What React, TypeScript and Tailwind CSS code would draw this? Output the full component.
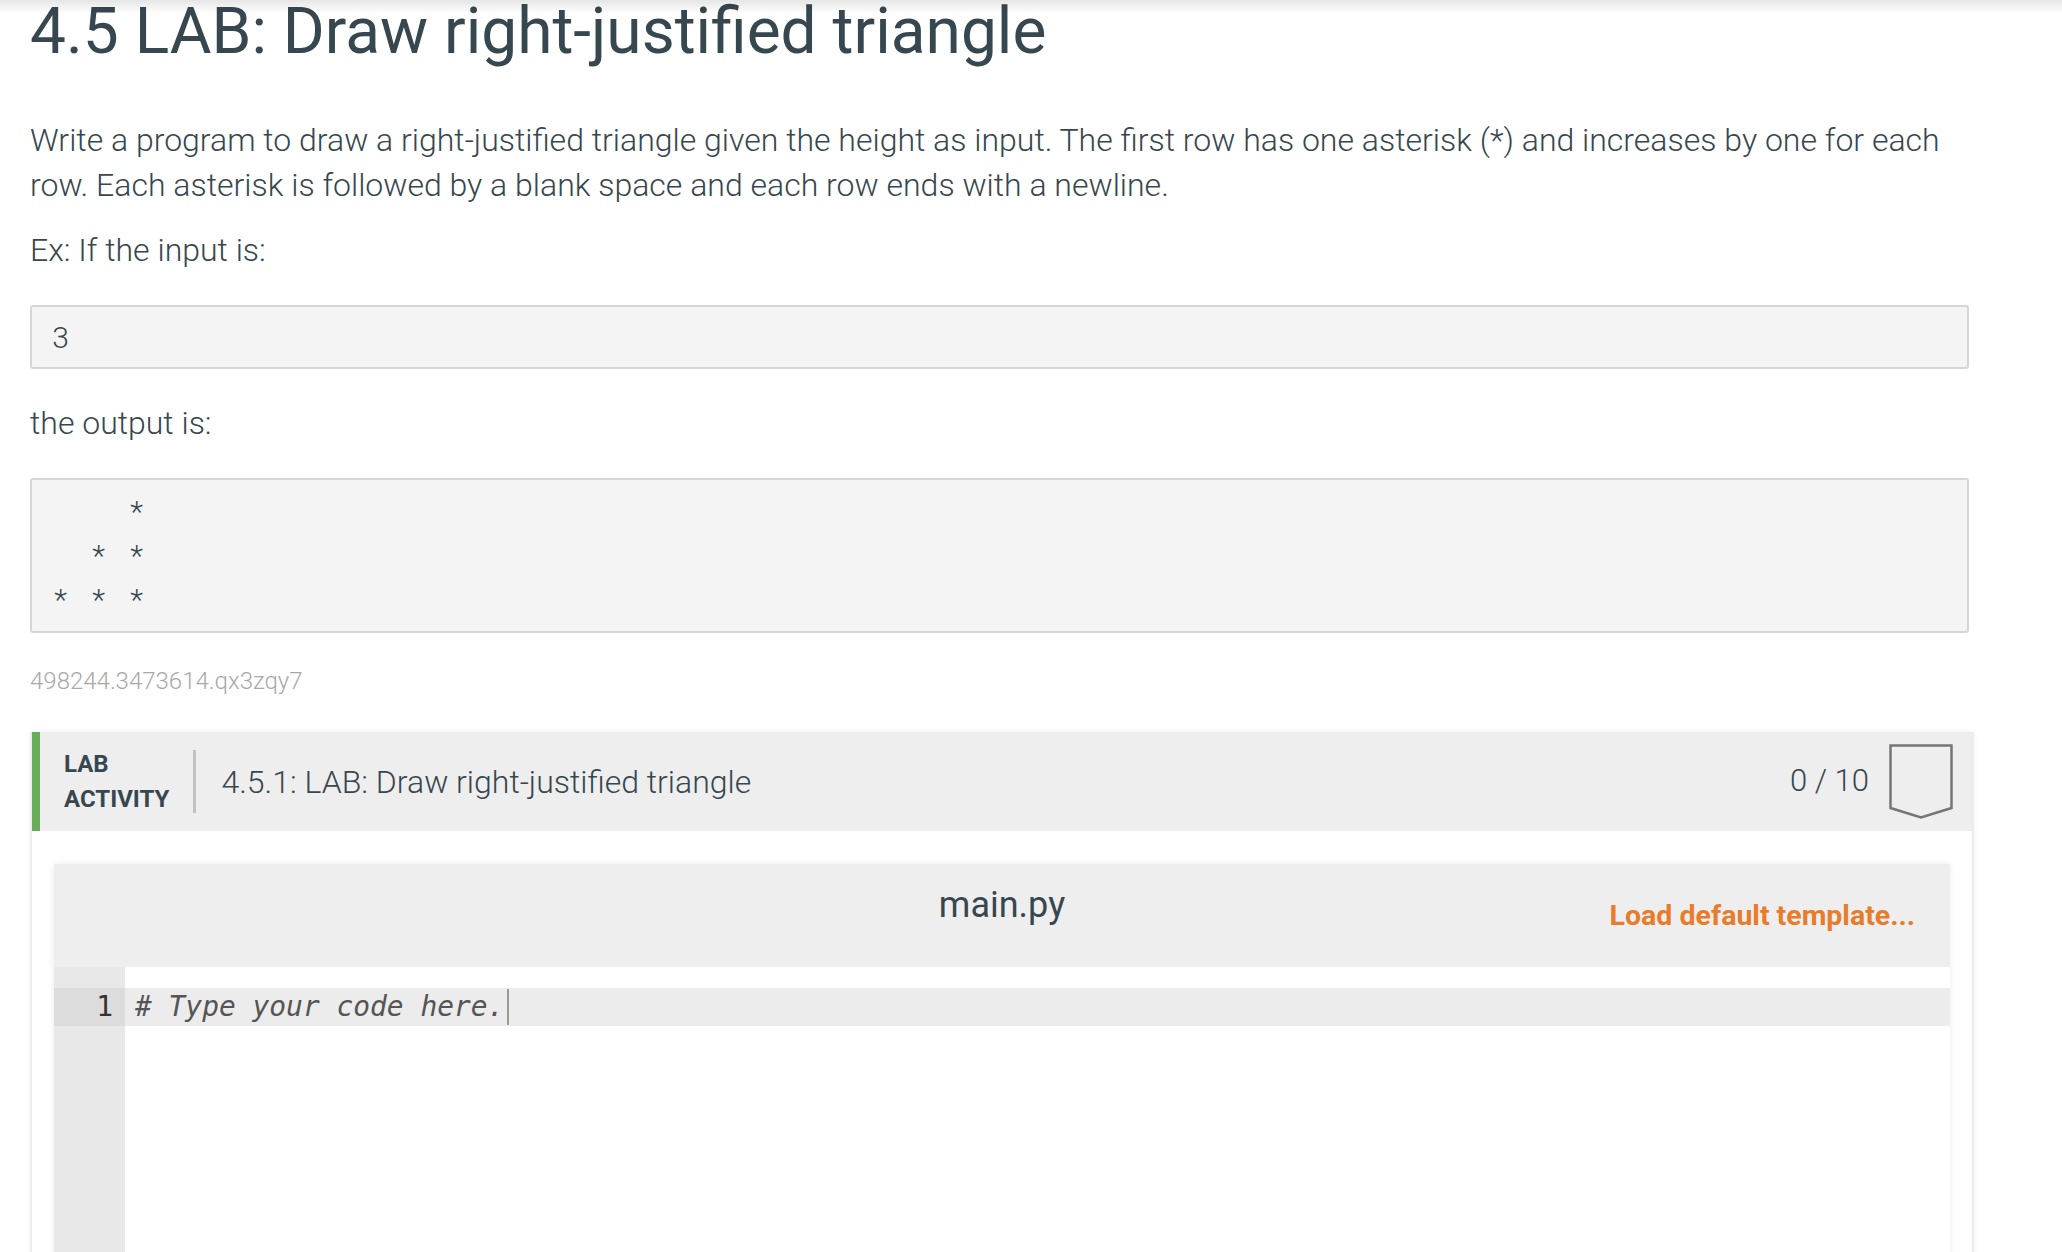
import React from 'react';

const outputRows = ['    *', '  * *', '* * *'];

// one fixed-width cell per character, so the triangle lines up like a console
const MonoRow = ({ text }: { text: string }) => (
  <div className="flex h-[44px] items-center">
    {text.split('').map((ch, i) => (
      <span key={i} className="inline-block w-[19px] text-center">
        {ch === ' ' ? '\u00a0' : ch}
      </span>
    ))}
  </div>
);

const Shield = () => (
  <svg width="64" height="75" viewBox="0 0 64 75" fill="none">
    <path d="M1.5 1.5 H62.5 V64 L32 73.5 L1.5 64 Z" stroke="#757575" strokeWidth="2.5" strokeLinejoin="miter" />
  </svg>
);

const App = () => {
  return (
    <div className="relative min-h-screen overflow-hidden bg-white font-['Roboto',sans-serif] text-[#37474f]">
      {/* shadow of the fixed header above */}
      <div className="pointer-events-none absolute inset-x-0 top-0 h-[14px] bg-linear-to-b from-black/10 to-transparent" />

      <div className="pl-[30px]">
        <h1 className="text-[64px] font-normal leading-none">4.5 LAB: Draw right-justified triangle</h1>

        <div className="w-[1939px] text-[32px] font-light leading-[45px]">
          <p className="mt-[54px] pr-[20px]">
            Write a program to draw a right-justified triangle given the height as input. The first row has one asterisk (*) and increases by one for each row. Each asterisk is followed by a blank space and each row ends with a newline.
          </p>
          <p className="mt-[20px]">Ex: If the input is:</p>

          <div className="mt-[32px] rounded-[3px] border-2 border-[#d6d6d6] bg-[#f4f4f4] px-[19px] py-[8px] text-[30px]">
            <MonoRow text="3" />
          </div>

          <p className="mt-[32px]">the output is:</p>

          <div className="mt-[32px] rounded-[3px] border-2 border-[#d6d6d6] bg-[#f4f4f4] px-[19px] pb-[10px] pt-[9px] text-[30px]">
            {outputRows.map((r, i) => (
              <MonoRow key={i} text={r} />
            ))}
          </div>

          <p className="mt-[32px] text-[24px] leading-[33px] text-[#a8a8a8]">498244.3473614.qx3zqy7</p>
        </div>

        {/* Lab activity card */}
        <div className="mt-[34px] w-[1944px] border-x-2 border-[#ececec] shadow-[0_0_6px_rgba(0,0,0,0.06)]">
          <div className="flex h-[99px] items-center border-l-[8px] border-[#68ad5a] bg-[#eeeeee] pr-[19px]">
            <div className="ml-[24px] text-[24px] font-bold leading-[35px]">
              <div>LAB</div>
              <div>ACTIVITY</div>
            </div>
            <div className="ml-[24px] h-[63px] w-[3px] bg-[#c2c2c2]" />
            <div className="ml-[25px] text-[32px] font-light">4.5.1: LAB: Draw right-justified triangle</div>
            <div className="ml-auto flex items-center gap-[20px]">
              <span className="text-[31px] font-light">0 / 10</span>
              <Shield />
            </div>
          </div>

          <div className="px-[22px] pt-[33px]">
            <div className="shadow-[0_0_8px_rgba(0,0,0,0.08)]">
              <div className="grid h-[103px] grid-cols-[1fr_auto_1fr] bg-[#eeeeee]">
                <div />
                <div className="pt-[21px] text-[36px] leading-[40px]">main.py</div>
                <div className="flex items-center justify-end pr-[35px]">
                  <span className="pt-[2px] text-[28.5px] font-bold text-[#e87c2a]">Load default template...</span>
                </div>
              </div>

              <div className="flex h-[400px] bg-white font-['DejaVu_Sans_Mono',monospace] text-[27.9px]">
                <div className="w-[71px] bg-[#e8e8e8] pt-[21px]">
                  <div className="flex h-[38px] items-center justify-end bg-[#dcdcdc] pr-[12px] text-[#333333]">1</div>
                </div>
                <div className="flex-1 pt-[21px]">
                  <div className="flex h-[38px] items-center bg-[#ececec] pl-[10px]">
                    <span className="italic text-[#555555]">
                      # Type your code here.
                    </span>
                    <span className="ml-[3px] h-[36px] w-[2px] bg-[#9a9a9a]" />
                  </div>
                </div>
              </div>
            </div>
          </div>
        </div>
      </div>
    </div>
  );
};

export default App;
